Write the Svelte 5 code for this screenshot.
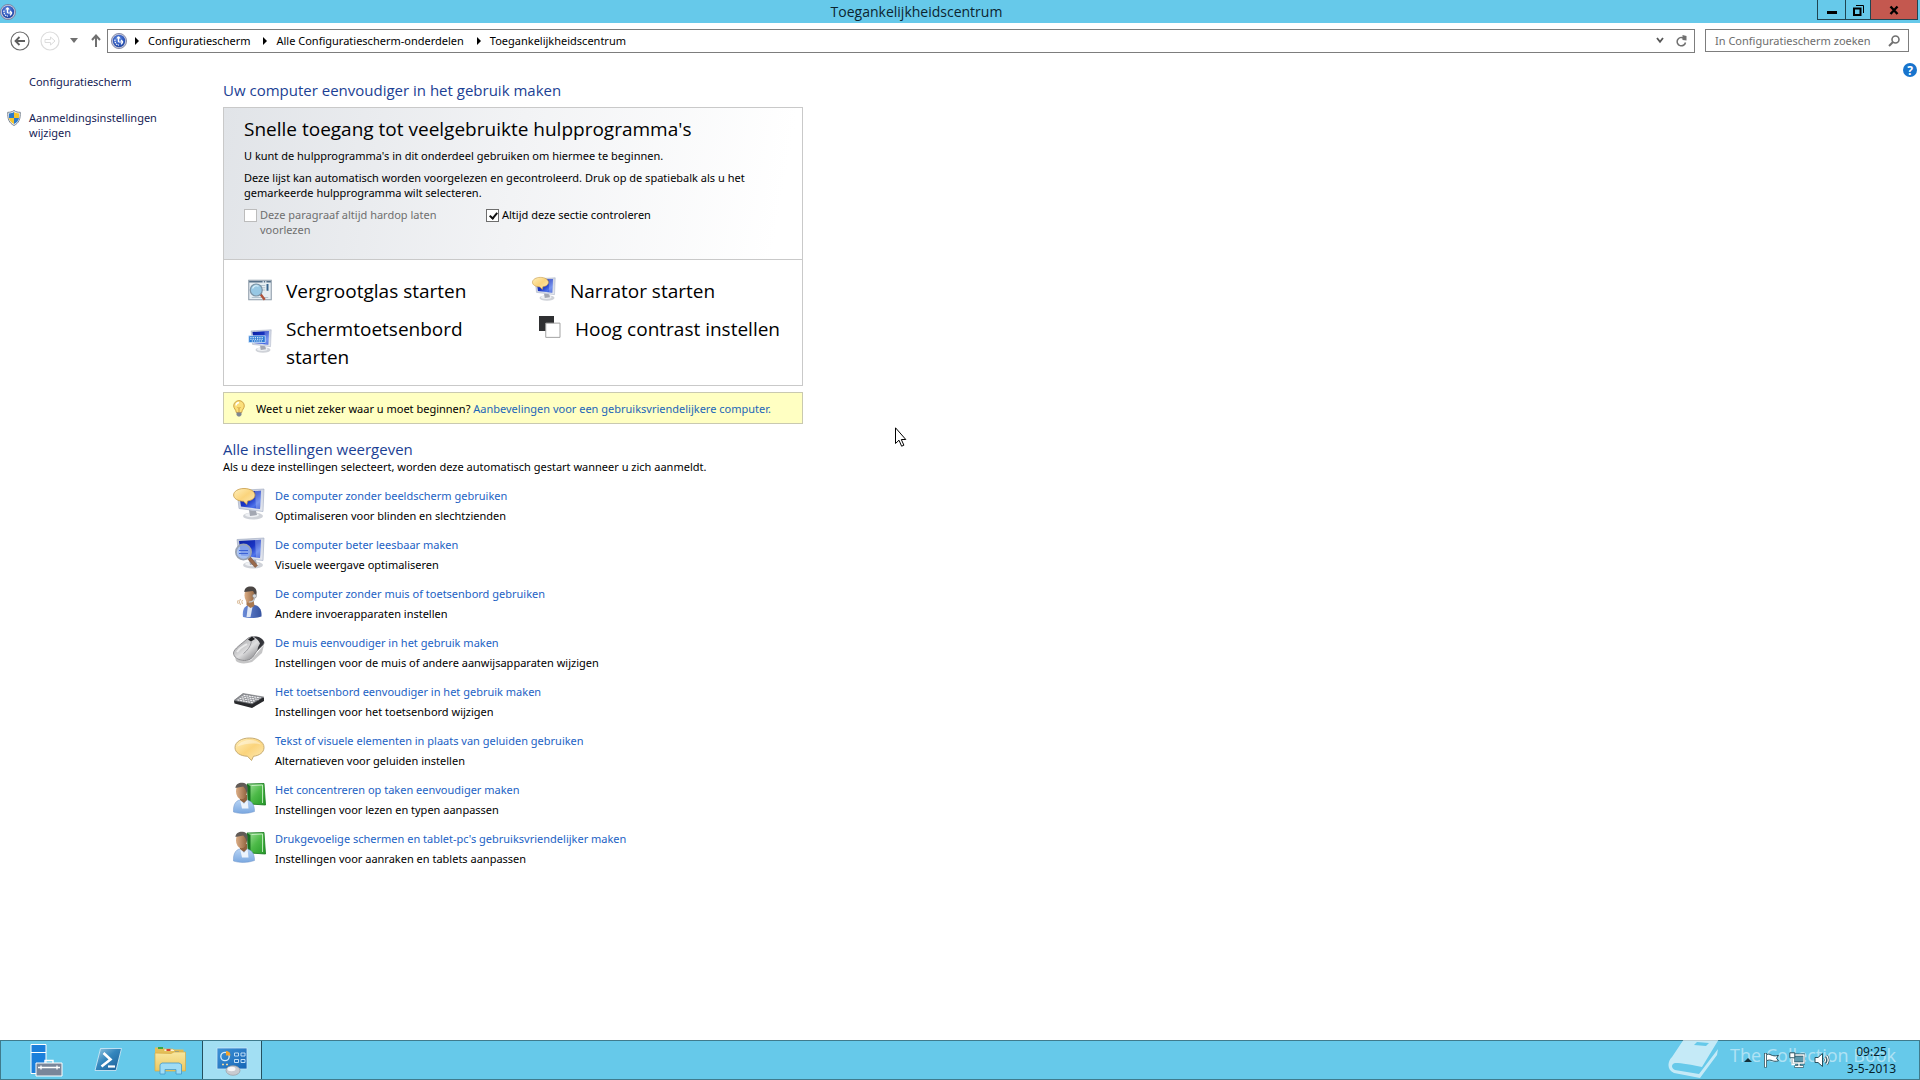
<script>
  const crumbs = ['Configuratiescherm', 'Alle Configuratiescherm-onderdelen', 'Toegankelijkheidscentrum'];

  const tools = [
    { icon: 'magnifier', label: 'Vergrootglas starten' },
    { icon: 'narrator', label: 'Narrator starten' },
    { icon: 'keyboardScreen', label: 'Schermtoetsenbord starten' },
    { icon: 'contrast', label: 'Hoog contrast instellen' }
  ];

  const settings = [
    { icon: 'narrator', title: 'De computer zonder beeldscherm gebruiken', text: 'Optimaliseren voor blinden en slechtzienden' },
    { icon: 'screenZoom', title: 'De computer beter leesbaar maken', text: 'Visuele weergave optimaliseren' },
    { icon: 'speaker', title: 'De computer zonder muis of toetsenbord gebruiken', text: 'Andere invoerapparaten instellen' },
    { icon: 'mouse', title: 'De muis eenvoudiger in het gebruik maken', text: 'Instellingen voor de muis of andere aanwijsapparaten wijzigen' },
    { icon: 'keyboard', title: 'Het toetsenbord eenvoudiger in het gebruik maken', text: 'Instellingen voor het toetsenbord wijzigen' },
    { icon: 'balloon', title: 'Tekst of visuele elementen in plaats van geluiden gebruiken', text: 'Alternatieven voor geluiden instellen' },
    { icon: 'reader', title: 'Het concentreren op taken eenvoudiger maken', text: 'Instellingen voor lezen en typen aanpassen' },
    { icon: 'reader', title: "Drukgevoelige schermen en tablet-pc's gebruiksvriendelijker maken", text: 'Instellingen voor aanraken en tablets aanpassen' }
  ];

  const apps = [
    { icon: 'server', label: 'Serverbeheer', active: false },
    { icon: 'powershell', label: 'Windows PowerShell', active: false },
    { icon: 'explorer', label: 'Verkenner', active: false },
    { icon: 'control', label: 'Toegankelijkheidscentrum', active: true }
  ];

  let readAloud = $state(false);
  let scanSection = $state(true);
  let query = $state('');
</script>

<svg class="defs" width="0" height="0" aria-hidden="true">
  <defs>
    <linearGradient id="gScreen" x1="0" y1="0" x2="1" y2="1"><stop offset="0" stop-color="#0a1fa0" /><stop offset=".5" stop-color="#1a35c4" /><stop offset=".75" stop-color="#4f74ea" /><stop offset="1" stop-color="#1b3cc8" /></linearGradient>
    <linearGradient id="gBezel" x1="0" y1="0" x2="1" y2="1"><stop offset="0" stop-color="#b9c2d6" /><stop offset="1" stop-color="#e6e9f0" /></linearGradient>
    <linearGradient id="gBalloon" x1="0" y1="0" x2="1" y2="1"><stop offset="0" stop-color="#fff0bd" /><stop offset=".5" stop-color="#fbd47c" /><stop offset="1" stop-color="#fdebb8" /></linearGradient>
    <linearGradient id="gGreen" x1="0" y1="0" x2="1" y2="1"><stop offset="0" stop-color="#a5e29f" /><stop offset=".5" stop-color="#4dba48" /><stop offset="1" stop-color="#249a28" /></linearGradient>
    <linearGradient id="gShirt" x1="0" y1="0" x2="0" y2="1"><stop offset="0" stop-color="#b9d5f5" /><stop offset="1" stop-color="#7ba8e0" /></linearGradient>
    <linearGradient id="gNavy" x1="0" y1="0" x2="1" y2="0"><stop offset="0" stop-color="#6a8bd8" /><stop offset="1" stop-color="#35529f" /></linearGradient>
    <linearGradient id="gSkin" x1="0" y1="0" x2="1" y2="0"><stop offset="0" stop-color="#dcae86" /><stop offset="1" stop-color="#8f623e" /></linearGradient>
    <linearGradient id="gMouse" x1="0" y1="0" x2="1" y2="1"><stop offset="0" stop-color="#8e8e92" /><stop offset=".5" stop-color="#dededf" /><stop offset="1" stop-color="#5c5c60" /></linearGradient>
    <radialGradient id="gOrb" cx=".45" cy=".35" r=".7"><stop offset="0" stop-color="#6f97e4" /><stop offset=".6" stop-color="#2f58bd" /><stop offset="1" stop-color="#1e4299" /></radialGradient>
    <linearGradient id="gPs" x1="0" y1="0" x2="1" y2="1"><stop offset="0" stop-color="#9ccbe4" /><stop offset=".45" stop-color="#3486bd" /><stop offset="1" stop-color="#1a5b94" /></linearGradient>
    <linearGradient id="gFolder" x1="0" y1="0" x2="0" y2="1"><stop offset="0" stop-color="#f8e7a0" /><stop offset="1" stop-color="#eec85e" /></linearGradient>
    <linearGradient id="gPanel" x1="0" y1="0" x2="1" y2="1"><stop offset="0" stop-color="#3f93d8" /><stop offset="1" stop-color="#1565b4" /></linearGradient>
  </defs>
</svg>

{#snippet monitor()}
  <ellipse cx="20" cy="28" rx="10" ry="3.600" fill="#cfd2d8" />
  <ellipse cx="19" cy="27" rx="7" ry="2.200" fill="#eef0f3" />
  <path d="M16 22l7 1 1 4-7 1z" fill="#a3a7b2" />
  <path d="M4 2.500L31 1l-1 22.500L6 20.500z" fill="url(#gBezel)" stroke="#9ea8bf" stroke-width=".6" />
  <path d="M6 4L28 2.800 27 21 8 18.500z" fill="url(#gScreen)" />
  <path d="M22 3.200L28 2.800 27 21 23 20.500z" fill="#c3d3fa" opacity=".35" />
{/snippet}

{#snippet glyph(name)}
  <svg class="glyph" viewBox="0 0 32 32" aria-hidden="true">
    {#if name === 'narrator'}
      {@render monitor()}
      <path d="M11 .5c6 0 11 2.700 11 6.500s-4 5.500-7.500 6l-.7 3.500-3.300-3.200C4.500 13 .6 10.500.6 7S5 .5 11 .5z" fill="url(#gBalloon)" stroke="#c79a45" stroke-width=".8" />
    {:else if name === 'screenZoom'}
      {@render monitor()}
      <path d="M14 21l8 9.500 2.500-2-7.500-9z" fill="#9a6a4c" stroke="#70492f" stroke-width=".5" />
      <circle cx="10.500" cy="15" r="7.600" fill="#9fbdf5" fill-opacity=".8" stroke="#9aa4b4" stroke-width="1.800" />
      <path d="M6 13.500h9M6 16.500h9" stroke="#3c63d6" stroke-width="1.200" />
    {:else if name === 'keyboardScreen'}
      {@render monitor()}
      <path d="M1 9h22v9H1z" fill="#2b7bd4" stroke="#d7e8fb" />
      <path d="M3 11.500h18M3 13.700h18M5 16h14" stroke="#fff" stroke-width="1.200" stroke-dasharray="1.800 1.200" />
    {:else if name === 'magnifier'}
      <path d="M1 3h30v26H1z" fill="#e6eef3" stroke="#8d9ba8" stroke-width="1.400" />
      <path d="M1.500 5h29" stroke="#567088" stroke-width="1.800" stroke-dasharray="18 1.500 2 1.500" />
      <path d="M17 10h6M17 13h6M17 16h6M5 26h22" stroke="#b3c4cf" stroke-width="1.400" />
      <path d="M26 8v9" stroke="#36648c" stroke-width="2.600" />
      <path d="M15 22l6 8 2.500-2-6-8z" fill="#b0523a" />
      <circle cx="11" cy="16" r="8" fill="#8ec3e2" fill-opacity=".9" stroke="#7b93a5" stroke-width="1.600" />
      <path d="M6 14c2-4 6-4 8-3" stroke="#d9f0fa" stroke-width="1.800" fill="none" />
    {:else if name === 'contrast'}
      <path d="M0 0h20v20H0z" fill="#2f3032" />
      <path d="M9 9.500h19v19H9z" fill="#fff" stroke="#a0a0a0" stroke-width="1.300" />
    {:else if name === 'speaker'}
      <path d="M10 31c-1-8 2-12 8-12.500 7 0 11 3.500 10.500 12-6 2-13 2-18.500.5z" fill="url(#gNavy)" />
      <path d="M15 19l-1.500 12h4l2-10z" fill="#dfe7f5" />
      <path d="M13.500 15l7-1 1 6-4 2-4-3z" fill="#a87850" />
      <ellipse cx="17" cy="9.500" rx="5.500" ry="7.800" fill="url(#gSkin)" />
      <path d="M11.300 6C11.500 1.500 15 0 18.500.500 23.500 1 24.500 6 23 10L21.500 7.500 20 5z" fill="#4a4543" />
      <path d="M21 10c1.500 4-1 6-5 6" fill="none" stroke="#c4c9d0" stroke-width="1.200" />
      <circle cx="21.500" cy="10" r="2" fill="#d7dade" stroke="#777" stroke-width=".5" />
      <path d="M9.500 14q-1.500 1.500 0 4M7.500 13q-2.400 2.500 0 6M5.300 14q-1.500 2 0 4" fill="none" stroke="#d6b48d" stroke-width="1" />
    {:else if name === 'mouse'}
      <path d="M2 22c3 4 10 5 16 3l13-15-2 8-10 9c-6 2-13 2-16-1z" fill="#8b8b8e" opacity=".5" />
      <path d="M14 4c4-4 14-3 17 3 .5 4-5 5.500-8.500 11-2.500 4.500-5 7.500-11 7.500C5 25.500.5 22 .5 18S9 8.500 14 4z" fill="url(#gMouse)" stroke="#6e6e72" stroke-width=".7" />
      <path d="M21 2c4-1 8.500 1 10 5 .2 3-4 5-6.500 8.500.2-3.500 1.500-5 2.500-7-1-2.500-3-4.500-6-6.500z" fill="#34353a" />
      <path d="M15 4.500L19 1.500l3 2.500-4 2.500z" fill="#1f2023" />
      <path d="M18.500 6.500c-1 5-4 9-8 12" stroke="#8b8b90" stroke-width=".8" fill="none" />
      <path d="M4 17c3-5 7-6 10-8" stroke="#fff" stroke-width="1.800" fill="none" opacity=".6" />
    {:else if name === 'keyboard'}
      <path d="M1 17L9 11l22 2.500v3.500l-12 7L1.500 19.500z" fill="#28292c" />
      <path d="M1 16.500L10 9.500l20.500 3.500-11.500 7z" fill="#8f9196" stroke="#66686c" stroke-width=".6" />
      <path d="M4.500 15.900l15.500 2.800M6.500 14.300l16 2.800M8.500 12.800l17 2.800M10.500 11.300l17 2.600" stroke="#f5f5f6" stroke-width="1.100" stroke-dasharray="2 .7" />
    {:else if name === 'balloon'}
      <path d="M16.500 5C25 5 31 9 31 14.500c0 5-4.500 8-10.500 8.800L18.500 27.500l-4-4.200C7 23 2 19.500 2 14.500 2 9 8.500 5 16.500 5z" fill="url(#gBalloon)" stroke="#bfa469" stroke-width=".9" />
      <path d="M4.500 13.500c2-5 8-6.500 13-6.500 5 0 9 2 10.500 4.500-7-2-16-1-23.500 2z" fill="#fff" opacity=".4" />
    {:else if name === 'reader'}
      <path d="M14 2l17-.5 1.500 21.500L17 22z" fill="url(#gGreen)" stroke="#14741b" stroke-width=".8" />
      <path d="M14 2l3.500 2v19l-3-3z" fill="#167021" />
      <path d="M18.500 3.500L29.500 3v18" stroke="#d8f5d5" stroke-width=".8" fill="none" />
      <path d="M.5 30C0 22 3 17.500 10 17.500c8 0 11.500 4 11.500 12-7 2.500-15 2.500-21 .5z" fill="url(#gShirt)" stroke="#6b93c8" stroke-width=".5" />
      <path d="M7 17.500l4 4.500 3.500-4.500 1 9H9z" fill="#edf4fc" />
      <path d="M7 13h7v5l-3 3-4-3z" fill="#8f623e" />
      <ellipse cx="8.500" cy="9.500" rx="5.500" ry="7.800" fill="url(#gSkin)" />
      <path d="M2.500 6C2.500 2 6 .500 9.500.700c5 .3 6.300 5 4.300 10.300l-1.500-4-2-2.500z" fill="#615b57" />
    {:else if name === 'server'}
      <path d="M1 .5h15v29H1z" fill="#1b7fdb" stroke="#fff" />
      <path d="M1 8.500h15" stroke="#fff" />
      <path d="M15 19.500v-3h8v3" fill="none" stroke="#fff" stroke-width="1.400" />
      <path d="M6 19h26v13H6z" fill="#79869a" stroke="#fff" />
      <path d="M8 23.500h22M11 21.500v4M27 21.500v4" stroke="#fff" stroke-width="1.300" />
    {:else if name === 'powershell'}
      <path d="M8.500 4.500h21l-5.500 22H3z" fill="url(#gPs)" stroke="#d5ecf8" stroke-width=".8" />
      <path d="M11.500 9l7 6.500-9 7" fill="none" stroke="#fff" stroke-width="2.600" />
      <path d="M16 22.500h7" stroke="#fff" stroke-width="2.200" />
    {:else if name === 'explorer'}
      <path d="M1 6V3.500h8l2 2h18.500V26H1z" fill="#e4bf58" />
      <path d="M4 4h5" stroke="#39a845" stroke-width="2" />
      <path d="M10 7V5h9l2 2h8" fill="#faf3cf" stroke="#d9b34c" stroke-width=".7" />
      <path d="M12.500 6h4" stroke="#d8432e" stroke-width="2" />
      <path d="M21 8.500h4" stroke="#3383d8" stroke-width="2" />
      <path d="M1 9l16 .5 3-1.500h11.500v19H1z" fill="url(#gFolder)" stroke="#d5aa44" stroke-width=".7" />
      <path d="M6 30V20.500l2-1.500h17l2.500 1.500V30h-5.500v-4.500H11V30z" fill="#9fdcf5" stroke="#4199cc" stroke-width=".8" />
    {:else if name === 'control'}
      <path d="M1 4h30v21H1z" fill="url(#gPanel)" stroke="#c8e4f6" stroke-width=".8" />
      <circle cx="9" cy="12.500" r="4.200" fill="none" stroke="#d4ecfc" stroke-width="1.300" />
      <path d="M10 11.500V7a4.500 4.500 0 0 1 4.500 4.500z" fill="#f7a32b" />
      <path d="M18.500 9h4v3h-4zM25 9h4v3h-4zM18.500 15.500h4v3h-4zM25 15.500h4v3h-4z" fill="#1f6fbe" stroke="#cfe9fb" stroke-width=".9" />
      <path d="M6 20.500h2M10 20.500h2" stroke="#f5d79b" stroke-width="1.600" />
      <ellipse cx="17" cy="26.500" rx="7" ry="4.800" fill="#c9cbd0" stroke="#9a9ca1" stroke-width=".7" />
      <ellipse cx="15.500" cy="25" rx="4" ry="2.200" fill="#f6f6f7" />
    {/if}
  </svg>
{/snippet}

{#snippet orb()}
  <svg class="orb" viewBox="0 0 16 16" aria-hidden="true">
    <circle cx="8" cy="8" r="7.600" fill="#c3c8dc" stroke="#75799a" stroke-width=".8" />
    <circle cx="8" cy="8" r="6.200" fill="url(#gOrb)" />
    <path d="M7.500 3.500V9M7.500 9h4.500M12 9l-2-2M12 9l-2 2.300M7.500 3.500l-1.600 2M7.500 3.500l1.600 2" stroke="#fff" stroke-width="1.200" fill="none" />
    <path d="M4 6.500c-.5 3 1 5.200 4 5.600" fill="none" stroke="#fff" stroke-width="1.200" stroke-dasharray="1.500 .8" />
  </svg>
{/snippet}

<div class="window">
  <header class="titlebar">
    {@render orb()}
    <h1>Toegankelijkheidscentrum</h1>
    <div class="caption">
      <button class="min" aria-label="Minimaliseren"><svg viewBox="0 0 12 12"><path d="M1 7h10v3H1z" /></svg></button>
      <button class="restore" aria-label="Verkleinen"><svg viewBox="0 0 12 12"><path d="M2 4.500h6.500V11H2z" fill="none" stroke="#000" stroke-width="2" /><path d="M4 1.500h7.500V9" fill="none" stroke="#000" /></svg></button>
      <button class="close" aria-label="Sluiten"><svg viewBox="0 0 12 12"><path d="M2.500 2.500l7 7.500M9.500 2.500l-7 7.500" stroke="#000" stroke-width="2.400" /></svg></button>
    </div>
  </header>

  <nav class="toolbar" aria-label="Navigatie">
    <div class="history">
      <button aria-label="Vorige"><svg width="20" height="20" viewBox="0 0 20 20"><circle cx="10" cy="10" r="9" fill="none" stroke="#6b6b6b" stroke-width="1.200" /><path d="M15 10H6M9.500 6L5.500 10l4 4" fill="none" stroke="#5e5e5e" stroke-width="1.800" /></svg></button>
      <button aria-label="Volgende" disabled><svg width="20" height="20" viewBox="0 0 20 20"><circle cx="10" cy="10" r="9" fill="none" stroke="#dcdcdc" stroke-width="1.200" /><path d="M5 8.500h5.500V6l4.500 4-4.500 4v-2.500H5z" fill="none" stroke="#dcdcdc" /></svg></button>
      <button aria-label="Recente locaties"><svg width="8" height="5" viewBox="0 0 8 5"><path d="M0 0h8L4 5z" fill="#707070" /></svg></button>
      <button aria-label="Omhoog"><svg width="10" height="14" viewBox="0 0 10 14"><path d="M5 13V2M1 6l4-4.500L9 6" fill="none" stroke="#707070" stroke-width="2" /></svg></button>
    </div>
    <div class="address">
      {@render orb()}
      {#each crumbs as crumb}
        <svg class="arrow" width="4" height="8" viewBox="0 0 4 8" aria-hidden="true"><path d="M0 0l4 4-4 4z" /></svg>
        <a href="#{crumb}">{crumb}</a>
      {/each}
      <div class="address-tools">
        <button aria-label="Vorige locaties"><svg width="8" height="7" viewBox="0 0 8 7"><path d="M1 1l3 3.800L7 1" fill="none" stroke="#555" stroke-width="1.800" /></svg></button>
        <button aria-label="Vernieuwen"><svg width="11" height="12" viewBox="0 0 11 12"><path d="M9.500 7.500A4.200 4.200 0 1 1 7.500 3" fill="none" stroke="#707070" stroke-width="1.500" /><path d="M6.500 0L10.500 1v4.500L6.500 5z" fill="#707070" /></svg></button>
      </div>
    </div>
    <form class="search" role="search">
      <input type="search" aria-label="In Configuratiescherm zoeken" placeholder="In Configuratiescherm zoeken" bind:value={query} />
      <svg width="12" height="12" viewBox="0 0 12 12" aria-hidden="true"><circle cx="7.500" cy="4.500" r="3.500" fill="none" stroke="#707070" stroke-width="1.600" /><path d="M5 7L1 11" stroke="#707070" stroke-width="2" /></svg>
    </form>
  </nav>

  <div class="body">
    <aside>
      <a class="home" href="#configuratiescherm">Configuratiescherm</a>
      <a class="signin" href="#aanmelding">
        <svg width="14" height="16" viewBox="0 0 14 16" aria-hidden="true">
          <path d="M7 .5C5 2 3 2.300.700 2.300.500 9 2 13 7 15.500 12 13 13.500 9 13.300 2.300 11 2.300 9 2 7 .5z" fill="#e9eef4" stroke="#7e8894" />
          <path d="M7 2C5.500 3 4 3.400 2 3.500V8h5z" fill="#2b79c9" /><path d="M7 2c1.500 1 3 1.400 5 1.500V8H7z" fill="#f5c52c" />
          <path d="M2 8h5v6C4 12.500 2.500 10.500 2 8z" fill="#f5c52c" /><path d="M12 8H7v6c3-1.500 4.500-3.500 5-6z" fill="#2b79c9" />
        </svg>
        <span>Aanmeldingsinstellingen wijzigen</span>
      </a>
    </aside>

    <main>
      <h2>Uw computer eenvoudiger in het gebruik maken</h2>

      <section class="quick">
        <div class="intro">
          <h3>Snelle toegang tot veelgebruikte hulpprogramma's</h3>
          <p>U kunt de hulpprogramma's in dit onderdeel gebruiken om hiermee te beginnen.</p>
          <p>Deze lijst kan automatisch worden voorgelezen en gecontroleerd. Druk op de spatiebalk als u het gemarkeerde hulpprogramma wilt selecteren.</p>
          <div class="checks">
            <label class="off"><input type="checkbox" disabled bind:checked={readAloud} /><span>Deze paragraaf altijd hardop laten voorlezen</span></label>
            <label><input type="checkbox" bind:checked={scanSection} /><span>Altijd deze sectie controleren</span></label>
          </div>
        </div>
        <div class="tools">
          {#each tools as tool}
            <a class={tool.icon} href="#{tool.icon}">{@render glyph(tool.icon)}<span>{tool.label}</span></a>
          {/each}
        </div>
      </section>

      <div class="tip">
        <svg width="12" height="17" viewBox="0 0 12 17" aria-hidden="true">
          <path d="M6 .6a5.300 5.300 0 0 0-5.300 5.300C.7 8.500 3 9.500 3.300 12.500h5.400C9 9.500 11.300 8.500 11.300 5.900A5.300 5.300 0 0 0 6 .6z" fill="#fbdf7a" stroke="#c99a3c" stroke-width=".9" />
          <path d="M3 5.500C3.200 3.800 4.500 2.600 6 2.500" fill="none" stroke="#fff" stroke-width="1.400" />
          <path d="M4.500 7l1.500 1.500L7.500 7M6 8.500v3.500" fill="none" stroke="#c98f34" stroke-width=".8" />
          <path d="M3.500 12.500h5V15L7 16.500H5L3.500 15z" fill="#7d8691" />
        </svg>
        <p>Weet u niet zeker waar u moet beginnen? <a href="#aanbevelingen">Aanbevelingen voor een gebruiksvriendelijkere computer.</a></p>
      </div>

      <section class="all">
        <h2>Alle instellingen weergeven</h2>
        <p>Als u deze instellingen selecteert, worden deze automatisch gestart wanneer u zich aanmeldt.</p>
        <ul>
          {#each settings as item, i}
            <li>
              {@render glyph(item.icon)}
              <div><a href="#instelling-{i}">{item.title}</a><p>{item.text}</p></div>
            </li>
          {/each}
        </ul>
      </section>
    </main>

    <button class="help" aria-label="Help">?</button>
  </div>

  <footer class="taskbar">
    <div class="apps">
      {#each apps as app}
        <button class:active={app.active} aria-label={app.label}>{@render glyph(app.icon)}</button>
      {/each}
    </div>
    <div class="tray">
      <button aria-label="Verborgen pictogrammen weergeven"><svg width="8" height="4" viewBox="0 0 8 4"><path d="M4 0l4 4H0z" fill="#12303a" /></svg></button>
      <button aria-label="Onderhoudscentrum"><svg width="16" height="16" viewBox="0 0 16 16"><path d="M1.500 1v14.500" stroke="#28505f" stroke-width="3" /><path d="M2.500 2.500c3-1 4 .5 6 1 2 .6 3.500.500 6-.200l-2 3 2 2.500c-3 .8-4.500.500-6-.100-2-.7-3.500-1-6 0z" fill="#fff" stroke="#28505f" /><path d="M1.500 1.500v13.500" stroke="#fff" stroke-width="1.400" /></svg></button>
      <button aria-label="Netwerk"><svg width="16" height="16" viewBox="0 0 16 16"><path d="M4 3h11.500v8H4zM10 11v4M5.500 14.500h9" fill="#5c98ac" stroke="#28505f" stroke-width="3" /><path d="M4.500 3h10.500v8H4.500zM10 11v3.500M6 14.500h8" fill="none" stroke="#fff" stroke-width="1.400" /><path d="M.8.800h5v5h-5z" fill="#fff" stroke="#28505f" /><path d="M3 6v6.500h3" fill="none" stroke="#fff" stroke-width="1.300" /></svg></button>
      <button aria-label="Volume"><svg width="16" height="16" viewBox="0 0 16 16"><path d="M1 5.500h3L8.500 1.500v13L4 10.500H1z" fill="#fff" stroke="#28505f" /><path d="M10.500 5.500q1.800 2.500 0 5M12.500 3.500q3.400 4.500 0 9" fill="none" stroke="#28505f" stroke-width="2.600" /><path d="M10.500 5.500q1.800 2.500 0 5M12.500 3.500q3.400 4.500 0 9" fill="none" stroke="#fff" stroke-width="1.300" /></svg></button>
      <time datetime="2013-05-03T09:25">09:25<br />3-5-2013</time>
    </div>
    <div class="mark">
      <svg width="52" height="40" viewBox="0 0 52 40" aria-hidden="true">
        <path d="M16 0h35L34 28C24 26 14 24 7 24 3 25 3 29 7 31l24 4L50 10l-1 6L32 39 6 34C-1 31-1 23 4 18z" fill="#fff" />
        <path d="M29 3l12 1-3 3-12-1z" fill="#66c9ea" />
      </svg>
      <span>The Collection Book</span>
    </div>
  </footer>

  <svg class="pointer" width="12" height="21" viewBox="0 0 12 21" aria-hidden="true"><path d="M.5.800v15.700l3.500-3.300 2.600 6 2.300-1-2.600-5.700h4.500z" fill="#fff" stroke="#000" /></svg>
</div>

<style>
  :global(body) { margin: 0; background: #fff; }
  .defs { position: absolute; }
  .window {
    position: relative; display: flex; flex-direction: column; min-height: 100vh;
    font: 11px/15px "Noto Sans", "Open Sans", sans-serif; color: #000;
  }
  h1, h2, h3, p, ul { margin: 0; padding: 0; font-weight: 400; }
  h1, h2, h3, .tools { font-family: "Open Sans", "Noto Sans", sans-serif; }
  a { color: inherit; text-decoration: none; }
  button { display: flex; align-items: center; justify-content: center; margin: 0; padding: 0; border: 0; background: none; font: inherit; color: inherit; }
  .glyph { display: block; flex: none; width: 32px; height: 32px; overflow: visible; }
  .orb { display: block; flex: none; width: 16px; height: 16px; }

  .titlebar { display: flex; align-items: center; height: 23px; background: #66c9ea; }
  .titlebar h1 { flex: 1; font-size: 14px; line-height: 22px; text-align: center; color: #0c2530; }
  .caption { display: flex; align-self: flex-start; padding-right: 2px; }
  .caption button { box-sizing: border-box; height: 20px; border: 1px solid #1f4552; border-top: 0; }
  .caption button + button { border-left: 0; }
  .caption svg { width: 12px; height: 12px; }
  .min { width: 29px; }
  .restore { width: 25px; }
  .caption .close { width: 47px; background: #c4584f; }

  .toolbar { display: flex; align-items: center; height: 35px; padding: 0 11px 0 10px; }
  .history { display: flex; align-items: center; gap: 10px; width: 97px; flex: none; }
  .history button:nth-child(4) { margin-left: 3px; }
  .address { display: flex; align-items: center; flex: 1; box-sizing: border-box; height: 24px; padding: 0 7px 0 3px; border: 1px solid #7d7d7d; }
  .address a { padding-right: 5px; }
  .arrow { margin: 0 9px 0 8px; }
  .address-tools { display: flex; gap: 12px; margin-left: auto; }
  .search { display: flex; align-items: center; box-sizing: border-box; width: 204px; height: 23px; margin-left: 10px; padding: 0 8px 0 9px; border: 1px solid #7d7d7d; }
  .search input { flex: 1; min-width: 0; padding: 0; border: 0; outline: 0; background: none; font: inherit; }
  .search input::placeholder { color: #6d6d6d; opacity: 1; }

  .body { display: flex; align-items: flex-start; flex: 1; }
  aside { box-sizing: border-box; width: 223px; flex: none; padding: 16px 48px 0 7px; color: #151c55; }
  .home { display: block; margin: 0 0 21px 22px; }
  .signin { display: flex; gap: 8px; }
  .signin svg { flex: none; }
  main { width: 580px; padding-top: 20px; }
  h2 { font-size: 15px; line-height: 24px; color: #1c3f94; }
  .help { width: 14px; height: 14px; margin: 5px 3px 0 auto; border-radius: 50%; background: #1874cd; color: #fff; font-size: 12px; font-weight: 700; }

  .quick { margin-top: 5px; border: 1px solid #c9c9c9; }
  .intro { padding: 7px 32px 22px 20px; border-bottom: 1px solid #c9c9c9; background: linear-gradient(100deg, #e1e4e8, #f2f3f5 50%, #fff 95%); }
  h3 { font-size: 19px; line-height: 28px; }
  .intro h3 + p { margin-top: 5px; }
  .intro p + p { margin-top: 7px; }
  .checks { display: grid; grid-template-columns: 242px 1fr; margin-top: 7px; }
  .checks label { display: flex; align-items: flex-start; gap: 3px; max-width: 196px; }
  .checks .off { color: #6f6f6f; }
  .checks input { appearance: none; position: relative; flex: none; width: 13px; height: 13px; margin: 2px 0 0; border: 1px solid #6e6e6e; background: #fff; }
  .checks input:disabled { border-color: #bcbcbc; }
  .checks input:checked::after { content: ""; position: absolute; left: 4px; top: 1px; width: 3px; height: 6px; border: solid #111; border-width: 0 2px 2px 0; transform: rotate(40deg); }

  .tools { display: grid; grid-template-columns: 284px 1fr; row-gap: 10px; padding: 17px 9px 14px 24px; font-size: 19px; line-height: 28px; }
  .tools a { display: flex; align-items: flex-start; gap: 14px; }
  .tools a span { max-width: 208px; }
  .tools .glyph { width: 24px; height: 24px; margin-top: 1px; }
  .tools .narrator .glyph { margin-top: 0; }
  .tools .keyboardScreen .glyph { margin-top: 14px; }
  .tools .contrast { padding-left: 7px; gap: 12px; }

  .tip { display: flex; align-items: center; gap: 11px; margin-top: 6px; padding: 7px 9px 6px; border: 1px solid #c9c9b0; background: #ffffc2; }
  .tip a { color: #1c66b8; }
  .all { margin-top: 15px; }
  .all h2 { line-height: 20px; }
  .all ul { display: grid; gap: 14px; margin-top: 14px; padding-left: 10px; list-style: none; }
  .all li { display: flex; gap: 10px; height: 35px; }
  .all li a { color: #1c62c4; }
  .all li p { margin-top: 5px; }

  .taskbar { position: relative; display: flex; justify-content: space-between; box-sizing: border-box; height: 40px; border: 1px solid #3f7b8d; background: #66c9ea; }
  .apps { display: flex; gap: 2px; padding-left: 15px; }
  .apps button { box-sizing: border-box; width: 60px; height: 38px; }
  .apps .active { border: solid #24505f; border-width: 0 1px; background: #a2dff3; }
  .tray { position: relative; z-index: 1; display: flex; align-items: center; gap: 9px; padding-right: 23px; }
  .tray button:first-child { margin-right: 3px; }
  .tray time { margin-left: 8px; color: #06222c; font-size: 12px; line-height: 17px; text-align: center; }
  .mark { position: absolute; right: 23px; bottom: 0; display: flex; align-items: center; gap: 10px; color: #fff; font: 18px/24px "Open Sans", sans-serif; }
  .mark svg { opacity: .62; }
  .mark span { opacity: .48; padding-bottom: 8px; }

  .pointer { position: absolute; left: 895px; top: 427px; }
</style>
